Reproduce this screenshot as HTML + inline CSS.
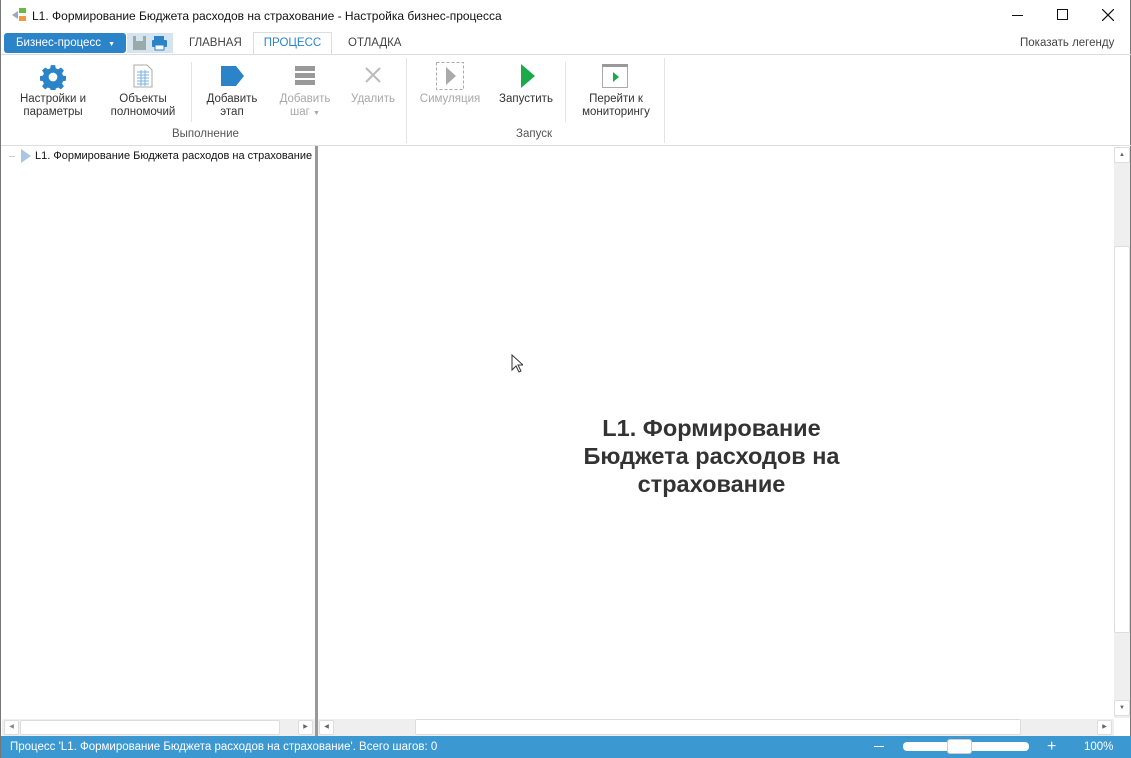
<!DOCTYPE html>
<html><head><meta charset="utf-8"><style>
*{box-sizing:border-box;margin:0;padding:0}
body{width:1131px;height:758px;overflow:hidden;background:#fff;font-family:"Liberation Sans","DejaVu Sans",sans-serif;font-size:12px;color:#222;position:relative;border-left:1px solid #777;border-right:1px solid #777}
.a{position:absolute}
.btn{position:absolute;text-align:center;font-size:11.5px;line-height:13px;color:#333}
.dis{color:#a8a8a8}
.sb{position:absolute;background:#fff;border:1px solid #ddd;border-radius:2px}
</style></head><body>
<svg class="a" style="left:9px;top:7px" width="18" height="16"><path d="M2 8 L8 4 L8 12Z" fill="#9ab"/><rect x="9" y="1" width="7" height="5" fill="#6b4"/><rect x="9" y="9" width="7" height="5" fill="#e94"/></svg>
<div class="a" style="left:31px;top:9px;font-size:12px;color:#111">L1. Формирование Бюджета расходов на страхование - Настройка бизнес-процесса</div>
<div class="a" style="left:1011px;top:15px;width:11px;height:1px;background:#111"></div>
<div class="a" style="left:1056px;top:9px;width:11px;height:11px;border:1px solid #111"></div>
<svg class="a" style="left:1101px;top:9px" width="12" height="12"><path d="M0 0L12 12M12 0L0 12" stroke="#111" stroke-width="1.2"/></svg>
<div class="a" style="left:3px;top:33px;width:122px;height:20px;background:#2b84c8;border-radius:3px;color:#fff;font-size:11.5px;line-height:20px;padding-left:12px">Бизнес-процесс <span style="font-size:7px;margin-left:4px">▼</span></div>
<div class="a" style="left:126px;top:33px;width:46px;height:20px;background:#d6e4f0"></div>
<svg class="a" style="left:131px;top:35px" width="40" height="16"><rect x="1" y="1" width="13" height="14" fill="#9aa"/><rect x="4" y="1" width="7" height="5" fill="#d6e4f0"/><rect x="22" y="1" width="10" height="4" fill="#2b84c8"/><rect x="20" y="5" width="15" height="7" rx="1" fill="#2b84c8"/><rect x="23" y="10" width="9" height="5" fill="#fff" stroke="#2b84c8"/></svg>
<div class="a" style="left:188px;top:37px;font-size:11.5px;color:#444">ГЛАВНАЯ</div>
<div class="a" style="left:252px;top:32px;width:79px;height:23px;border:1px solid #ddd;border-bottom:none;background:#fff;color:#2b84c8;font-size:11.5px;text-align:center;line-height:21px">ПРОЦЕСС</div>
<div class="a" style="left:347px;top:37px;font-size:11.5px;color:#444">ОТЛАДКА</div>
<div class="a" style="left:1019px;top:37px;font-size:11.5px;color:#444">Показать легенду</div>
<div class="a" style="left:0;top:54px;width:1131px;height:1px;background:#ddd"></div>
<svg class="a" style="left:39px;top:64px" width="26" height="26" viewBox="0 0 24 24"><path fill="#2b84c8" d="M10 1h4l.6 3 2.2.9 2.5-1.7 2.8 2.8-1.7 2.5.9 2.2 3 .6v4l-3 .6-.9 2.2 1.7 2.5-2.8 2.8-2.5-1.7-2.2.9-.6 3h-4l-.6-3-2.2-.9-2.5 1.7-2.8-2.8 1.7-2.5-.9-2.2-3-.6v-4l3-.6.9-2.2-1.7-2.5 2.8-2.8 2.5 1.7 2.2-.9z"/><circle cx="12" cy="12" r="4" fill="#fff"/></svg>
<div class="btn" style="left:12px;top:93px;width:80px">Настройки и<br>параметры</div>
<svg class="a" style="left:132px;top:64px" width="20" height="24"><path d="M1 1h13l5 5v17H1z" fill="#fff" stroke="#aaa"/><g stroke="#7ab0dd"><path d="M4 8h12M4 11h12M4 14h12M4 17h12M4 20h12M8 6v16M12 6v16"/></g></svg>
<div class="btn" style="left:102px;top:93px;width:80px">Объекты<br>полномочий</div>
<div class="a" style="left:190px;top:62px;width:1px;height:60px;background:#e4e4e4"></div>
<svg class="a" style="left:220px;top:66px" width="24" height="20"><path d="M0 0h15l8 10-8 10H0z" fill="#2b84c8"/></svg>
<div class="btn" style="left:196px;top:93px;width:70px">Добавить<br>этап</div>
<svg class="a" style="left:294px;top:66px" width="20" height="20"><g fill="#999"><rect y="0" width="20" height="5"/><rect y="7" width="20" height="5"/><rect y="14" width="20" height="5"/></g></svg>
<div class="btn dis" style="left:269px;top:93px;width:70px">Добавить<br>шаг <span style="font-size:7px">▼</span></div>
<svg class="a" style="left:364px;top:67px" width="16" height="16"><path d="M1 1L15 15M15 1L1 15" stroke="#bbb" stroke-width="2"/></svg>
<div class="btn dis" style="left:342px;top:93px;width:60px">Удалить</div>
<div class="a" style="left:405px;top:58px;width:1px;height:85px;background:#e4e4e4"></div>
<div class="a" style="left:171px;top:128px;font-size:11.5px;color:#555">Выполнение</div>
<svg class="a" style="left:435px;top:62px" width="28" height="28"><rect x=".5" y=".5" width="27" height="27" fill="none" stroke="#aaa" stroke-dasharray="3 2"/><path d="M10 5L20 14 10 23z" fill="#aaa"/></svg>
<div class="btn dis" style="left:414px;top:93px;width:70px">Симуляция</div>
<svg class="a" style="left:519px;top:64px" width="16" height="24"><path d="M1 0L15 12 1 24z" fill="#1aaa4a"/></svg>
<div class="btn" style="left:490px;top:93px;width:70px">Запустить</div>
<div class="a" style="left:564px;top:62px;width:1px;height:60px;background:#e4e4e4"></div>
<svg class="a" style="left:601px;top:64px" width="26" height="24"><rect x=".5" y=".5" width="25" height="23" fill="#fff" stroke="#aaa"/><rect x="0" y="0" width="26" height="3" fill="#999"/><path d="M11 8L17 13 11 18z" fill="#1aaa4a"/></svg>
<div class="btn" style="left:574px;top:93px;width:82px">Перейти к<br>мониторингу</div>
<div class="a" style="left:515px;top:128px;font-size:11.5px;color:#555">Запуск</div>
<div class="a" style="left:663px;top:58px;width:1px;height:85px;background:#e4e4e4"></div>
<div class="a" style="left:0;top:145px;width:1131px;height:1px;background:#ddd"></div>
<div class="a" style="left:8px;top:156px;width:6px;height:1px;background:#ccc"></div>
<svg class="a" style="left:19px;top:148px" width="12" height="16"><path d="M1 1L11 8 1 15z" fill="#a9c6e4"/></svg>
<div class="a" style="left:34px;top:150px;font-size:11px;color:#111">L1. Формирование Бюджета расходов на страхование</div>
<div class="a" style="left:314px;top:146px;width:3px;height:590px;background:#999"></div>
<div class="a" style="left:1px;top:719px;width:313px;height:17px;background:#efefef"></div>
<div class="sb" style="left:3px;top:720px;width:15px;height:15px;font-size:6px;color:#888;text-align:center;line-height:13px">◀</div>
<div class="sb" style="left:19px;top:720px;width:260px;height:15px"></div>
<div class="sb" style="left:297px;top:720px;width:15px;height:15px;font-size:6px;color:#666;text-align:center;line-height:13px">▶</div>
<div class="a" style="left:318px;top:414px;width:785px;text-align:center;font-size:23.5px;font-weight:bold;line-height:28px;color:#333">L1. Формирование<br>Бюджета расходов на<br>страхование</div>
<svg class="a" style="left:510px;top:354px" width="12" height="19"><path d="M1 1v15l4-4 3 6 2-1-3-6h5z" fill="#fff" stroke="#333"/></svg>
<div class="a" style="left:1113px;top:147px;width:16px;height:571px;background:#efefef"></div>
<div class="sb" style="left:1113px;top:147px;width:16px;height:16px;font-size:6px;color:#666;text-align:center;line-height:14px">▲</div>
<div class="sb" style="left:1113px;top:246px;width:16px;height:387px"></div>
<div class="sb" style="left:1113px;top:700px;width:16px;height:16px;font-size:6px;color:#666;text-align:center;line-height:14px">▼</div>
<div class="a" style="left:317px;top:719px;width:796px;height:17px;background:#efefef"></div>
<div class="sb" style="left:318px;top:720px;width:15px;height:15px;font-size:6px;color:#666;text-align:center;line-height:13px">◀</div>
<div class="sb" style="left:414px;top:719px;width:606px;height:16px"></div>
<div class="sb" style="left:1096px;top:720px;width:15px;height:15px;font-size:6px;color:#666;text-align:center;line-height:13px">▶</div>
<div class="a" style="left:0;top:736px;width:1131px;height:22px;background:#3c98d0;color:#fff;font-size:11.5px;line-height:22px;padding-left:9px">Процесс 'L1. Формирование Бюджета расходов на страхование'. Всего шагов: 0</div>
<div class="a" style="left:873px;top:746px;width:10px;height:1px;background:#fff"></div>
<div class="a" style="left:902px;top:742px;width:126px;height:9px;background:#fff;border-radius:4px"></div>
<div class="a" style="left:946px;top:739px;width:25px;height:15px;background:#fff;border:1px solid #ccc;border-radius:3px"></div>
<div class="a" style="left:1046px;top:737px;color:#fff;font-size:16px;line-height:20px">+</div>
<div class="a" style="left:1083px;top:736px;color:#fff;font-size:11.5px;line-height:22px">100%</div>
</body></html>
